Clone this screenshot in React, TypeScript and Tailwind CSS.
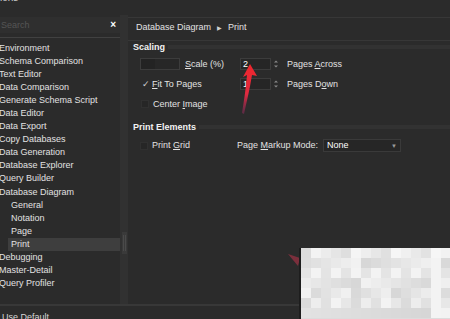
import React from "react";

const items: { label: string; child?: boolean; selected?: boolean }[] = [
  { label: "Environment" },
  { label: "Schema Comparison" },
  { label: "Text Editor" },
  { label: "Data Comparison" },
  { label: "Generate Schema Script" },
  { label: "Data Editor" },
  { label: "Data Export" },
  { label: "Copy Databases" },
  { label: "Data Generation" },
  { label: "Database Explorer" },
  { label: "Query Builder" },
  { label: "Database Diagram" },
  { label: "General", child: true },
  { label: "Notation", child: true },
  { label: "Page", child: true },
  { label: "Print", child: true, selected: true },
  { label: "Debugging" },
  { label: "Master-Detail" },
  { label: "Query Profiler" },
];

function Spinner() {
  return (
    <svg width="10" height="12" viewBox="0 0 10 12" className="shrink-0">
      <path d="M3 4.5 L5 2.5 L7 4.5 Z" fill="#8a8a8a" />
      <path d="M3 7.5 L5 9.5 L7 7.5 Z" fill="#8a8a8a" />
    </svg>
  );
}

function Acc({ pre, a, post }: { pre: string; a: string; post: string }) {
  return (
    <span className="whitespace-nowrap">
      {pre}
      <span className="underline underline-offset-[1px]">{a}</span>
      {post}
    </span>
  );
}

function SectionHeader({ title }: { title: string }) {
  return (
    <div className="flex items-center h-[10px] pl-[5px]">
      <span className="font-bold text-[#f2f2f2] pr-[3px]">{title}</span>
      <div className="flex-1 h-[4px] bg-[#323232]" />
    </div>
  );
}

function pixelColor(r: number, c: number) {
  const v = 214 + ((r * 37 + c * 53 + r * c * 11) % 30) + (r === 0 ? 6 : 0);
  const x = Math.min(246, v);
  return `rgb(${x},${x},${x})`;
}

export default function App() {
  const rows = 7;
  const cols = 15;
  return (
    <div className="relative w-[450px] h-[319px] overflow-hidden bg-[#2b2b2b] text-[#e2e2e2] font-['Liberation_Sans',Arial,sans-serif] text-[9px] leading-none">
      {/* window title (cut) */}
      <div className="h-[15px] overflow-hidden">
        <div className="-mt-[7px] text-[10px] text-[#cfcfcf]">ions</div>
      </div>

      <div className="flex h-[289px]">
        {/* left panel */}
        <div className="w-[120px] flex flex-col">
          <div className="mt-[2px] h-[16px] flex items-center justify-between bg-[#2f2f2f] pl-[1px] pr-[4px]">
            <span className="text-[#555555]">Search</span>
            <span className="font-bold text-white text-[10px]">×</span>
          </div>
          <div className="mt-[4px] h-[1px] bg-[#414141]" />
          <div className="pt-[3.5px] flex flex-col">
            {items.map((it) => (
              <div
                key={it.label}
                className={`h-[13.1px] flex items-center whitespace-nowrap ${
                  it.child ? "ml-[8px] pl-[3px]" : "-ml-[1px]"
                } ${it.selected ? "bg-[#3e3e3e]" : ""}`}
              >
                {it.label}
              </div>
            ))}
          </div>
        </div>

        {/* splitter */}
        <div className="w-[8px] bg-[#313131] flex flex-col items-center">
          <div className="mt-[217px] w-[5px] h-[22px] bg-[#3a3a3a] flex justify-center gap-[1px] py-[3px]">
            <div className="w-[1px] bg-[#4a4a4a]" />
            <div className="w-[1px] bg-[#4a4a4a]" />
          </div>
        </div>

        {/* main panel */}
        <div className="flex-1 flex flex-col">
          <div className="mt-[2px] h-[24px] border-t border-b border-[#373737] flex items-start pt-[5px] pl-[8px]">
            <span>Database Diagram</span>
            <span className="mx-[6px] text-[6px] text-[#cfcfcf] mt-[1.5px]">▶</span>
            <span>Print</span>
          </div>

          <div className="mt-[1px]">
            <SectionHeader title="Scaling" />
          </div>

          {/* row 1 */}
          <div className="mt-[6px] h-[12px] flex items-center pl-[12px]">
            <div className="w-[100px] flex items-center">
              <div className="w-[40px] h-[12px] border border-[#3c3c3c] bg-[#272727] flex">
                <div className="w-[14px] h-full bg-[#232323]" />
              </div>
              <span className="ml-[5px]">
                <Acc pre="" a="S" post="cale (%)" />
              </span>
            </div>
            <div className="w-[31px] h-[12px] border border-[#3c3c3c] bg-[#262626] flex items-center pl-[2px] text-white">
              2
            </div>
            <Spinner />
            <span className="ml-[6px]">
              <Acc pre="Pages " a="A" post="cross" />
            </span>
          </div>

          {/* row 2 */}
          <div className="mt-[8px] h-[12px] flex items-center pl-[12px]">
            <div className="w-[100px] flex items-center">
              <span className="w-[12px] pl-[2px] text-[#cfcfcf] text-[9px]">✓</span>
              <Acc pre="" a="F" post="it To Pages" />
            </div>
            <div className="w-[31px] h-[12px] border border-[#3c3c3c] bg-[#262626] flex items-center pl-[2px] text-white">
              1
            </div>
            <Spinner />
            <span className="ml-[6px]">
              <Acc pre="Pages D" a="o" post="wn" />
            </span>
          </div>

          {/* row 3 */}
          <div className="mt-[8px] h-[12px] flex items-center pl-[13px]">
            <div className="w-[8px] h-[8px] bg-[#262626] border border-[#303030]" />
            <span className="ml-[4px]">
              <Acc pre="Center " a="I" post="mage" />
            </span>
          </div>

          <div className="mt-[12px]">
            <SectionHeader title="Print Elements" />
          </div>

          {/* print grid row */}
          <div className="mt-[7px] h-[13px] flex items-center pl-[12px]">
            <div className="w-[8px] h-[8px] bg-[#262626] border border-[#303030]" />
            <span className="ml-[4px] w-[85px]">
              <Acc pre="Print " a="G" post="rid" />
            </span>
            <Acc pre="Page " a="M" post="arkup Mode:" />
            <div className="ml-[5px] w-[78px] h-[13px] border border-[#3a3a3a] bg-[#262626] flex items-center justify-between pl-[3px] pr-[3px]">
              <span className="text-white">None</span>
              <span className="text-[6px] text-[#9a9a9a]">▼</span>
            </div>
          </div>
          <div className="flex-1" />
        </div>
      </div>

      {/* bottom bar */}
      <div className="h-[2px] bg-[#383838]" />
      <div className="pt-[7px] pl-[2px] text-[#d6d6d6]">
        <span>Use Default</span>
      </div>

      {/* red annotation arrow */}
      <svg
        className="absolute left-0 top-0 pointer-events-none"
        width="450"
        height="319"
        viewBox="0 0 450 319"
      >
        <defs>
          <linearGradient id="arrowGrad" x1="0" y1="0" x2="0" y2="1">
            <stop offset="0" stopColor="#f0262c" />
            <stop offset="0.6" stopColor="#e02a40" />
            <stop offset="1" stopColor="#7a2a55" stopOpacity="0.6" />
          </linearGradient>
        </defs>
        <path
          d="M250 64 L257 76 L252 75 C250 88 247 100 244 114 L242 113 C244 100 246 88 247 75 L243 77 Z"
          fill="url(#arrowGrad)"
        />
        <path d="M288 254 L300 258 L298 266 Z" fill="#8a3040" opacity="0.85" />
      </svg>

      {/* pixelated watermark */}
      <div className="absolute left-[299px] top-[248px] w-[151px] h-[71px] bg-[#1d1d1d] pl-[2px]">
        <div className="grid grid-cols-[repeat(15,10px)] grid-rows-[repeat(7,10px)] w-full h-full bg-[#dcdcdc]">
          {Array.from({ length: rows * cols }).map((_, i) => (
            <div
              key={i}
              style={{ backgroundColor: pixelColor(Math.floor(i / cols), i % cols) }}
            />
          ))}
        </div>
      </div>
    </div>
  );
}
